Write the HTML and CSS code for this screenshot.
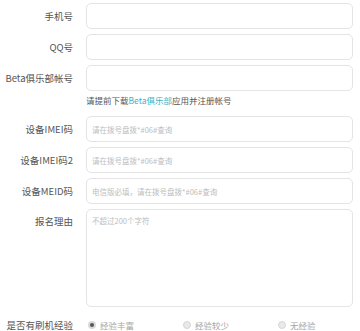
FILE: index.html
```html
<!doctype html>
<html lang="zh-CN">
    <head>
        <meta charset="UTF-8" />
        <title>Beta俱乐部报名</title>
        <link rel="stylesheet" href="styles.css">
    </head>
    <body>
        <form class="apply-form">
            <div class="field">
                <label class="field-label">手机号</label>
                <input class="field-input" type="text" />
            </div>
            <div class="field">
                <label class="field-label">QQ号</label>
                <input class="field-input" type="text" />
            </div>
            <div class="field">
                <label class="field-label">Beta俱乐部帐号</label>
                <input class="field-input" type="text" />
            </div>
            <div class="hint">
                请提前下载<a href="#" class="hint-link">Beta俱乐部</a>应用并注册帐号
            </div>
            <div class="field">
                <label class="field-label">设备IMEI码</label>
                <input class="field-input" type="text" placeholder="请在拨号盘拨*#06#查询" />
            </div>
            <div class="field">
                <label class="field-label">设备IMEI码2</label>
                <input class="field-input" type="text" placeholder="请在拨号盘拨*#06#查询" />
            </div>
            <div class="field">
                <label class="field-label">设备MEID码</label>
                <input class="field-input" type="text" placeholder="电信版必填，请在拨号盘拨*#06#查询" />
            </div>
            <div class="field field-top">
                <label class="field-label">报名理由</label>
                <textarea class="field-input field-area" placeholder="不超过200个字符"></textarea>
            </div>
            <div class="field radio-field">
                <span class="field-label">是否有刷机经验</span>
                <div class="radio-group">
                    <label class="radio checked"><span class="dot"></span>经验丰富</label>
                    <label class="radio"><span class="dot"></span>经验较少</label>
                    <label class="radio"><span class="dot"></span>无经验</label>
                </div>
            </div>
        </form>
    </body>
</html>
```

FILE: styles.css
```css
:root {
    --text-color: #555;
    --hint-color: #555;
    --muted-color: #a5a5a5;
    --placeholder-color: #bdbdbd;
    --border-color: #e4e4e4;
    --link-color: #3fb3c6;
}

body {
    margin: 0;
    padding: 3px 7px 0 0;
    background: #fff;
    color: var(--text-color);
    font-family: "Noto Sans CJK SC", "Noto Sans", sans-serif;
    font-size: 9.5px;
}

.apply-form {
    display: flex;
    flex-direction: column;
    gap: 5px;
}

.field {
    display: grid;
    grid-template-columns: 73px 1fr;
    column-gap: 13px;
    align-items: center;
}

.field-top {
    align-items: start;
}

.field-label {
    text-align: right;
    white-space: nowrap;
    line-height: 14px;
}

.field-top .field-label {
    padding-top: 5px;
}

.field-input {
    box-sizing: border-box;
    height: 26px;
    margin: 0;
    padding: 0 5px;
    border: 1px solid var(--border-color);
    border-radius: 5px;
    background: #fff;
    font-family: inherit;
    font-size: 7.5px;
    color: var(--text-color);
    outline: none;
}

.field-input::placeholder {
    color: var(--placeholder-color);
}

.field-area {
    height: 98px;
    padding-top: 5px;
    resize: none;
}

.hint {
    margin: -2px 0 5px 86px;
    line-height: 12px;
    font-size: 8.5px;
    color: var(--hint-color);
    white-space: nowrap;
}

.hint-link {
    color: var(--link-color);
    text-decoration: none;
}

.radio-field {
    margin-top: 6px;
}

.radio-group {
    display: flex;
}

.radio {
    display: flex;
    align-items: center;
    gap: 4px;
    width: 93px;
    padding-left: 2px;
    font-size: 8.5px;
    line-height: 14px;
    color: var(--muted-color);
}

.dot {
    box-sizing: border-box;
    width: 8px;
    height: 8px;
    border-radius: 50%;
    border: 1px solid #d6d6d6;
    background: #e9e9e9;
}

.radio.checked .dot {
    background: #555;
    border: 2px solid #d9d9d9;
}
```
